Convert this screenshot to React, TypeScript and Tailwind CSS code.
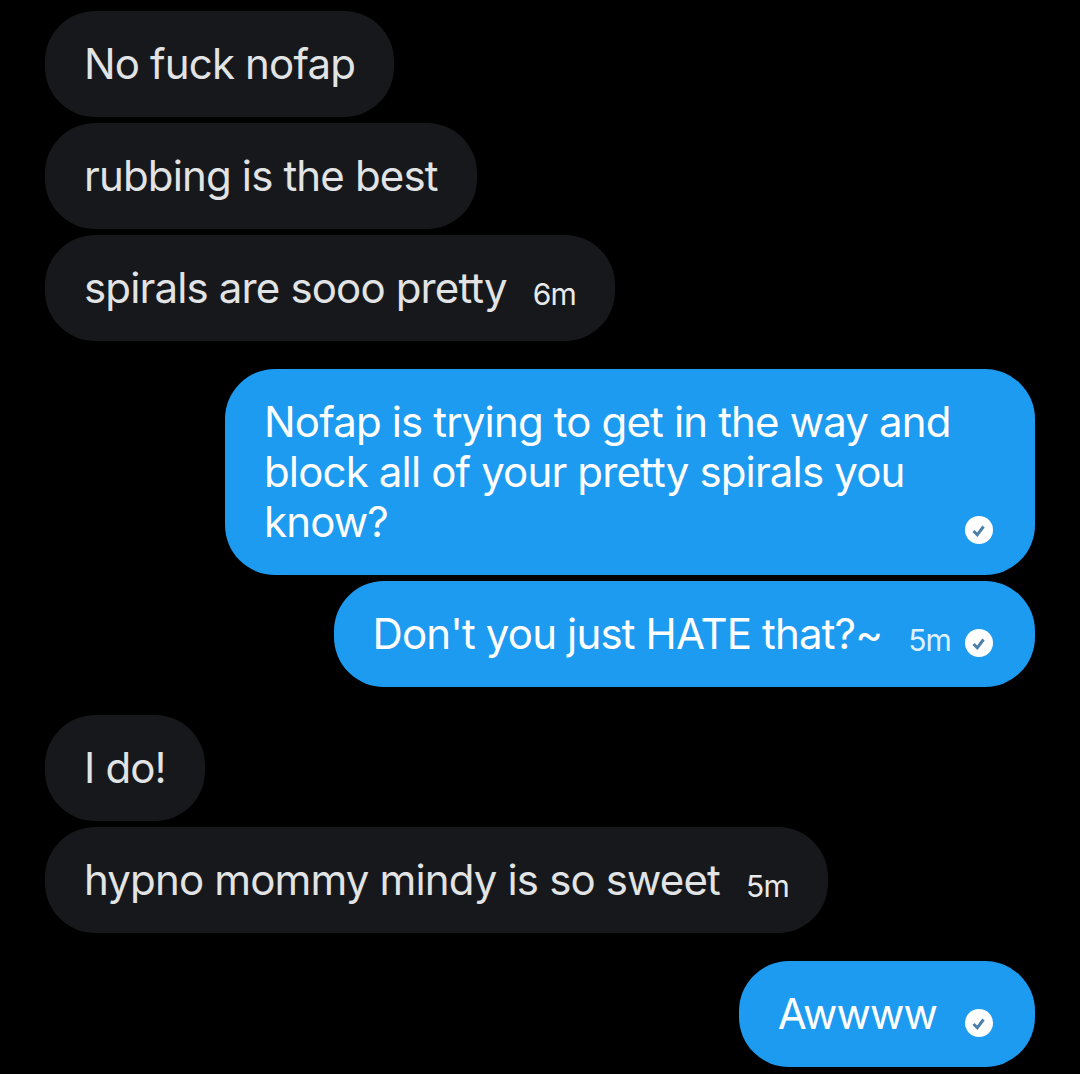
const Check = () => (
  <svg width="28" height="28" viewBox="0 0 28 28" className="shrink-0">
    <circle cx="14" cy="14" r="14" fill="#fff" />
    <path d="M8.5 15 L12.3 18.8 L18.5 10.5" fill="none" stroke="#4b7fa8" strokeWidth="3" />
  </svg>
);

const In = ({ text, time, mt }: { text: string; time?: string; mt: string }) => (
  <div className={`self-start h-[106px] rounded-[50px] bg-[#16181b] pl-[39px] pr-[39px] flex items-center ${mt}`}>
    <span className="-mt-[2px] text-[42px] text-[#e1e3e4] whitespace-nowrap">{text}</span>
    {time && <span className="text-[30px] text-[#e7e9ea] ml-[26px] mt-3">{time}</span>}
  </div>
);

export default function App() {
  return (
    <div className="w-[1080px] h-[1074px] bg-black overflow-hidden flex flex-col pl-[45px] pr-[45px] pt-[11px] font-['Inter',sans-serif] tracking-[-0.85px]">
      <In text="No fuck nofap" mt="" />
      <In text="rubbing is the best" mt="mt-[6px]" />
      <In text="spirals are sooo pretty" time="6m" mt="mt-[6px]" />
      <div className="self-end w-[810px] h-[206px] mt-[28px] rounded-[50px] bg-[#1d9bf0] pl-[39px] pr-10 pt-[28px] relative text-white text-[42px] leading-[50px]">
        Nofap is trying to get in the way and<br />block all of your pretty spirals you<br />know?
        <div className="absolute right-[42px] bottom-[31px]"><Check /></div>
      </div>
      <div className="self-end h-[106px] mt-[6px] rounded-[50px] bg-[#1d9bf0] pl-[39px] pr-[42px] flex items-center text-white">
        <span className="-mt-[2px] text-[42px] whitespace-nowrap">Don't you just HATE that?~</span>
        <span className="text-[30px] ml-[26px] mt-3 text-[#dff1fd]">5m</span>
        <span className="ml-[14px] mt-[18px]"><Check /></span>
      </div>
      <In text="I do!" mt="mt-[28px]" />
      <In text="hypno mommy mindy is so sweet" time="5m" mt="mt-[6px]" />
      <div className="self-end h-[106px] mt-[28px] rounded-[50px] bg-[#1d9bf0] pl-[39px] pr-[42px] flex items-center text-white">
        <span className="-mt-[2px] text-[42px] whitespace-nowrap">Awwww</span>
        <span className="ml-[28px] mt-[18px]"><Check /></span>
      </div>
    </div>
  );
}
